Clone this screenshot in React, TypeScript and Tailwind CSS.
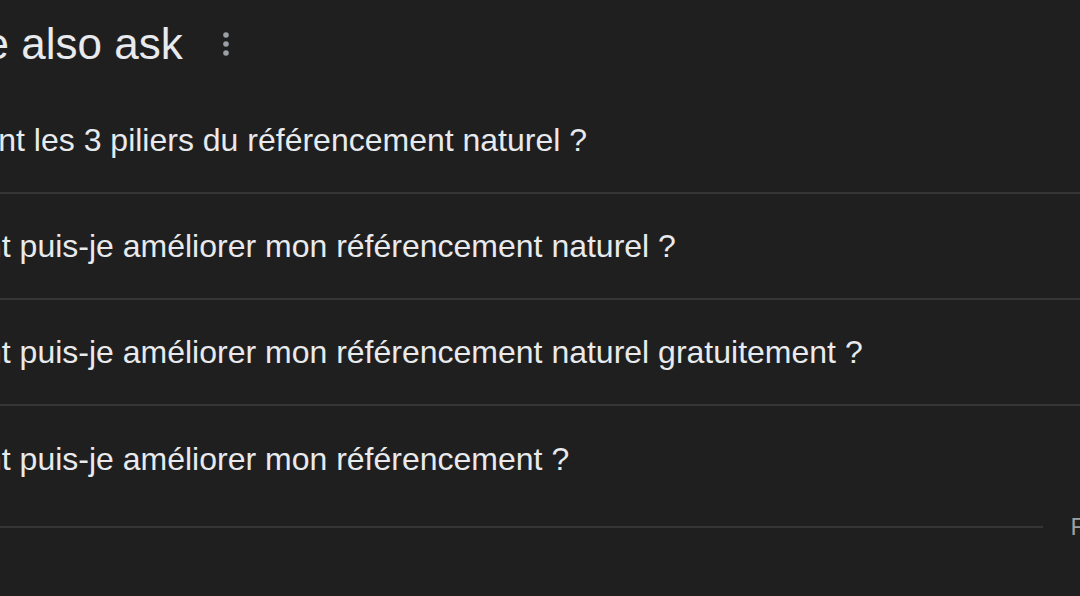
const questions = [
  "Quels sont les 3 piliers du référencement naturel ?",
  "Comment puis-je améliorer mon référencement naturel ?",
  "Comment puis-je améliorer mon référencement naturel gratuitement ?",
  "Comment puis-je améliorer mon référencement ?",
];

function MoreIcon() {
  return (
    <svg width="12" height="28" viewBox="0 0 12 28" className="text-[#9aa0a6]">
      <circle cx="6" cy="5" r="2.8" fill="currentColor" />
      <circle cx="6" cy="14" r="2.8" fill="currentColor" />
      <circle cx="6" cy="23" r="2.8" fill="currentColor" />
    </svg>
  );
}

export default function App() {
  return (
    <div
      className="w-[1080px] h-[596px] overflow-hidden bg-[#1f1f1f]"
      style={{ fontFamily: '"Liberation Sans", Arial, sans-serif' }}
    >
      <div className="ml-[-128px] w-[1304px]">
        {/* heading */}
        <div className="h-[88px] pt-[19px] flex items-start">
          <h2 className="text-[44px] leading-[50px] text-[#e8eaed]">People also ask</h2>
          <div className="ml-[37px] mt-[11px]">
            <MoreIcon />
          </div>
        </div>

        {/* questions */}
        <div>
          {questions.map((q, i) => (
            <div
              key={q}
              className={
                i < questions.length - 1
                  ? "h-[106px] flex items-center border-b-2 border-[#353535]"
                  : "h-[106px] flex items-center"
              }
            >
              <span className="text-[32px] text-[#e8eaed]">{q}</span>
            </div>
          ))}
        </div>

        {/* feedback */}
        <div className="h-[29px] flex items-center">
          <div className="flex-1 h-[2px] bg-[#353535]" />
          <span className="ml-[28px] text-[24px] leading-[29px] text-[#a0a0a0]">Feedback</span>
        </div>
      </div>
    </div>
  );
}
